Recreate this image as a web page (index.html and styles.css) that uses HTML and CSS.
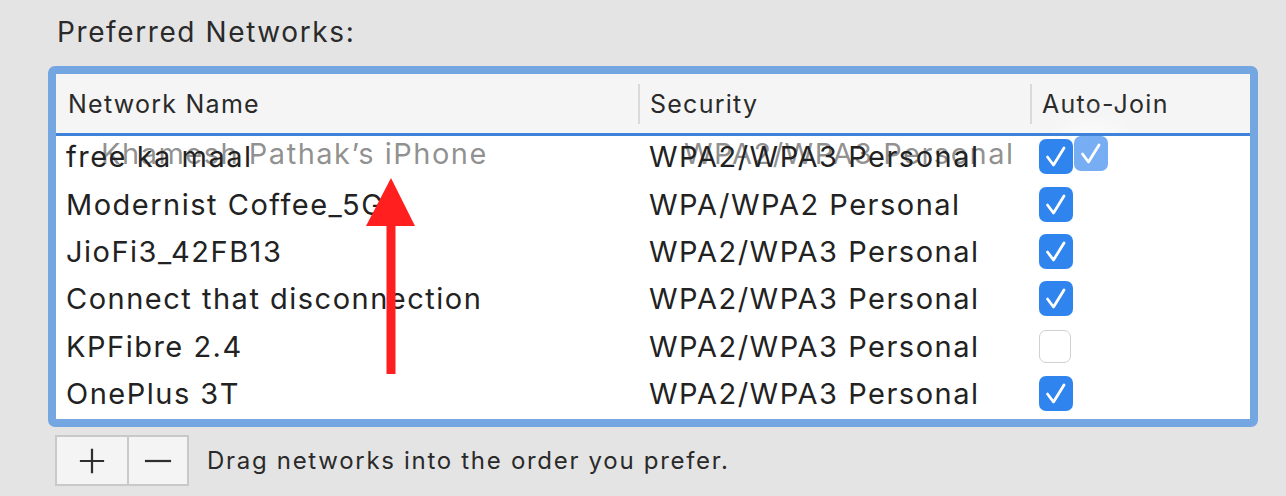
FILE: index.html
```html
<!DOCTYPE html>
<html>
<head>
    <meta charset="utf-8">
    <link rel="stylesheet" href="styles.css">
</head>
<body>
    <div class="pane">
        <div class="title">Preferred Networks:</div>

        <div class="list">
            <div class="list-head">
                <div class="hcol hname">Network Name</div>
                <div class="hcol hsec">Security</div>
                <div class="hcol hjoin">Auto-Join</div>
            </div>
            <div class="list-body">
                <div class="row">
                    <div class="cname">free ka maal</div>
                    <div class="csec">WPA2/WPA3 Personal</div>
                    <div class="cjoin"><span class="check on"><svg viewBox="0 0 34 34"><path d="M8.5 17.5 L14.5 25.5 L25 8.5"/></svg></span></div>
                </div>
                <div class="row">
                    <div class="cname">Modernist Coffee_5G</div>
                    <div class="csec">WPA/WPA2 Personal</div>
                    <div class="cjoin"><span class="check on"><svg viewBox="0 0 34 34"><path d="M8.5 17.5 L14.5 25.5 L25 8.5"/></svg></span></div>
                </div>
                <div class="row">
                    <div class="cname">JioFi3_42FB13</div>
                    <div class="csec">WPA2/WPA3 Personal</div>
                    <div class="cjoin"><span class="check on"><svg viewBox="0 0 34 34"><path d="M8.5 17.5 L14.5 25.5 L25 8.5"/></svg></span></div>
                </div>
                <div class="row">
                    <div class="cname">Connect that disconnection</div>
                    <div class="csec">WPA2/WPA3 Personal</div>
                    <div class="cjoin"><span class="check on"><svg viewBox="0 0 34 34"><path d="M8.5 17.5 L14.5 25.5 L25 8.5"/></svg></span></div>
                </div>
                <div class="row">
                    <div class="cname">KPFibre 2.4</div>
                    <div class="csec">WPA2/WPA3 Personal</div>
                    <div class="cjoin"><span class="check"></span></div>
                </div>
                <div class="row">
                    <div class="cname">OnePlus 3T</div>
                    <div class="csec">WPA2/WPA3 Personal</div>
                    <div class="cjoin"><span class="check on"><svg viewBox="0 0 34 34"><path d="M8.5 17.5 L14.5 25.5 L25 8.5"/></svg></span></div>
                </div>

                <!-- row being dragged -->
                <div class="row ghost">
                    <div class="cname">Khamesh Pathak’s iPhone</div>
                    <div class="csec">WPA2/WPA3 Personal</div>
                    <div class="cjoin"><span class="check on"><svg viewBox="0 0 34 34"><path d="M8.5 17.5 L14.5 25.5 L25 8.5"/></svg></span></div>
                </div>
                <div class="drop-line"></div>
            </div>
        </div>

        <div class="footer">
            <div class="seg">
                <div class="seg-btn plus"><svg viewBox="0 0 30 30"><path d="M2 15 H28 M15 2 V28"/></svg></div>
                <div class="seg-btn minus"><svg viewBox="0 0 30 30"><path d="M1 15 H29"/></svg></div>
            </div>
            <div class="hint">Drag networks into the order you prefer.</div>
        </div>

        <svg class="arrow" viewBox="0 0 60 204">
            <polygon points="31,4 6,52 55,52"/>
            <rect x="26.5" y="48" width="9" height="152"/>
        </svg>
    </div>
</body>
</html>
```

FILE: styles.css
```css
body {
    margin: 0;
    background-color: #e4e4e4;
    font-family: Inter, "Liberation Sans", Arial, sans-serif;
    color: #222;
}

.pane {
    position: relative;
    padding: 16px 0 0 48px;
    width: 1210px;
}

.title {
    margin-left: 9px;
    font-size: 28px;
    line-height: 33px;
    letter-spacing: 1.6px;
    color: #2a2a2a;
}

.list {
    margin-top: 17px;
    border: 8px solid #74a6e2;
    border-radius: 7px;
    background-color: #fff;
    padding-bottom: 2px;
}

.list-head {
    display: grid;
    grid-template-columns: 582px 392px 1fr;
    align-items: center;
    height: 59px;
    background-color: #f5f5f5;
}

.hcol {
    font-size: 25px;
    letter-spacing: 1.25px;
    color: #2a2a2a;
    height: 40px;
    line-height: 40px;
}

.hname {
    padding-left: 12px;
}

.hsec, .hjoin {
    border-left: 2px solid #dadada;
    padding-left: 10px;
}

.list-body {
    position: relative;
}

.row {
    display: grid;
    grid-template-columns: 582px 392px 1fr;
    align-items: center;
    height: 47.4px;
    font-size: 29px;
    letter-spacing: 1.5px;
}

.cname {
    padding-left: 10px;
}

.csec {
    padding-left: 11px;
}

.cjoin {
    padding-left: 9px;
    display: flex;
    align-items: center;
}

.check {
    width: 32px;
    height: 33px;
    box-sizing: border-box;
    border: 1.5px solid #d0d0d0;
    border-radius: 7px;
    background-color: #fff;
    display: flex;
}

.check.on {
    border: none;
    background-color: #2f84ee;
    width: 34px;
    height: 35px;
}

.check svg {
    width: 34px;
    height: 35px;
    fill: none;
    stroke: #fff;
    stroke-width: 2.8;
    stroke-linecap: round;
    stroke-linejoin: round;
}

.ghost {
    position: absolute;
    top: -3px;
    left: 35px;
    width: 1194px;
    color: rgba(70, 70, 70, 0.6);
    z-index: 0;
    pointer-events: none;
}

.ghost .check.on {
    background-color: #77adf3;
    box-shadow: 0 0 24px 14px rgba(255, 255, 255, 0.6);
}

.row:not(.ghost) {
    position: relative;
    z-index: 1;
}

.drop-line {
    position: absolute;
    top: 0;
    left: 0;
    right: 0;
    height: 3px;
    background-color: #3f82da;
    z-index: 2;
}

.footer {
    display: flex;
    align-items: center;
    margin-top: 8px;
    margin-left: 7px;
}

.seg {
    display: flex;
    border: 2px solid #c9c9c9;
    background-color: #f4f4f4;
    height: 47px;
}

.seg-btn {
    display: flex;
    align-items: center;
    justify-content: center;
}

.seg-btn.plus {
    width: 70px;
}

.seg-btn.minus {
    width: 58px;
    border-left: 2px solid #c9c9c9;
}

.seg-btn svg {
    width: 28px;
    height: 28px;
    fill: none;
    stroke: #2e2e2e;
    stroke-width: 2.4;
}

.hint {
    margin-left: 18px;
    font-size: 24px;
    letter-spacing: 1.7px;
    color: #2a2a2a;
}

.arrow {
    position: absolute;
    left: 360px;
    top: 174px;
    width: 60px;
    height: 204px;
    fill: #ff1f1f;
    z-index: 3;
}
```
